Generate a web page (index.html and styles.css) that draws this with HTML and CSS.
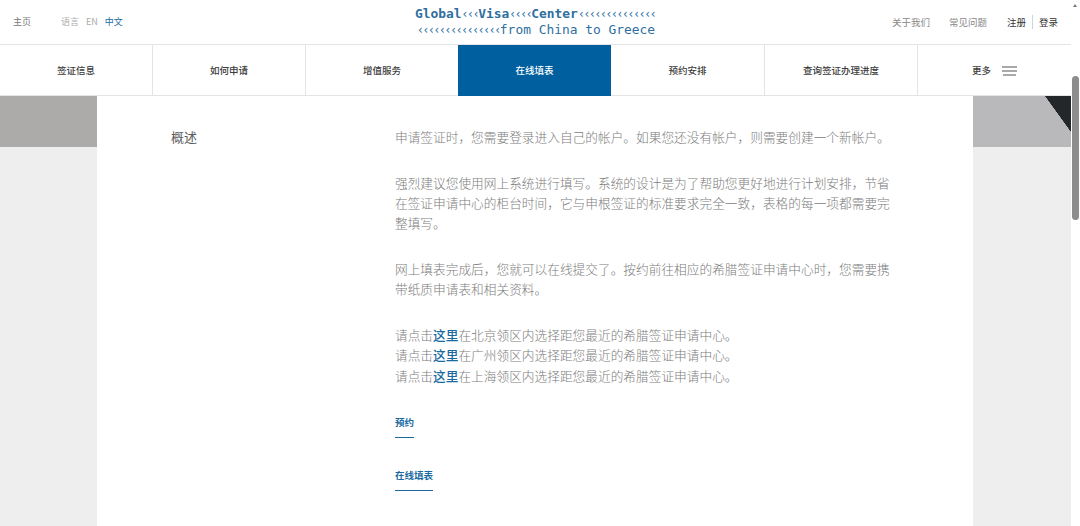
FILE: index.html
```html
<!DOCTYPE html>
<html lang="zh-CN">

<head>
  <meta charset="UTF-8">
  <meta name="viewport" content="width=device-width, initial-scale=1.0">
  <title>在线填表</title>
  <link rel="stylesheet" href="styles.css">
</head>

<body>
  <div class="page">
    <!-- 顶部栏 -->
    <header class="topbar">
      <div class="top-left">
        <a class="home">主页</a>
        <span class="lang-label">语言</span>
        <a class="lang">EN</a>
        <a class="lang active">中文</a>
      </div>
      <div class="logo">
        <div class="logo-line bold">Global<i>‹‹‹</i>Visa<i>‹‹‹‹</i>Center<i>‹‹‹‹‹‹‹‹‹‹‹‹‹‹</i></div>
        <div class="logo-line second"><i>‹‹‹‹‹‹‹‹‹‹‹‹‹‹‹</i>from China to Greece</div>
      </div>
      <div class="top-right">
        <a class="plain">关于我们</a>
        <a class="plain">常见问题</a>
        <a class="account first">注册</a>
        <a class="account">登录</a>
      </div>
    </header>

    <!-- 主导航 -->
    <nav class="nav">
      <a class="nav-item">签证信息</a>
      <a class="nav-item">如何申请</a>
      <a class="nav-item">增值服务</a>
      <a class="nav-item active">在线填表</a>
      <a class="nav-item">预约安排</a>
      <a class="nav-item">查询签证办理进度</a>
      <a class="nav-item more">更多
        <svg class="burger" width="15" height="10" viewBox="0 0 15 10">
          <path d="M0 1h15M0 5h15M1 9h13" stroke="#555" stroke-width="1.2" fill="none" />
        </svg>
      </a>
    </nav>

    <!-- 内容 -->
    <main class="main">
      <div class="card">
        <h2 class="side-title">概述</h2>
        <div class="text">
          <p>申请签证时，您需要登录进入自己的帐户。如果您还没有帐户，则需要创建一个新帐户。</p>
          <p>强烈建议您使用网上系统进行填写。系统的设计是为了帮助您更好地进行计划安排，节省在签证申请中心的柜台时间，它与申根签证的标准要求完全一致，表格的每一项都需要完整填写。</p>
          <p>网上填表完成后，您就可以在线提交了。按约前往相应的希腊签证申请中心时，您需要携带纸质申请表和相关资料。</p>
          <p class="last">请点击<a class="here">这里</a>在北京领区内选择距您最近的希腊签证申请中心。<br>
            请点击<a class="here">这里</a>在广州领区内选择距您最近的希腊签证申请中心。<br>
            请点击<a class="here">这里</a>在上海领区内选择距您最近的希腊签证申请中心。</p>
          <a class="section-link">预约</a>
          <a class="section-link">在线填表</a>
        </div>
      </div>
    </main>
  </div>

  <!-- 滚动条 -->
  <div class="scrollbar">
    <div class="arrow"></div>
    <div class="thumb"></div>
  </div>
</body>

</html>
```

FILE: styles.css
```css
html,
body {
  margin: 0;
  height: 526px;
  overflow: hidden;
}

body {
  display: flex;
  font-family: "Noto Sans CJK SC", "Liberation Sans", sans-serif;
  background: #fff;
}

.page {
  width: 1071px;
  height: 526px;
  display: flex;
  flex-direction: column;
}

/* 顶部栏 */
.topbar {
  height: 44px;
  flex: none;
  display: flex;
  justify-content: space-between;
  align-items: center;
  padding: 0 13px;
  border-bottom: 1px solid #e4e4e4;
  font-size: 9.5px;
  position: relative;
}

.top-left,
.top-right {
  display: flex;
  align-items: center;
}

.top-left {
  font-size: 9px;
  padding-bottom: 2px;
}

.home {
  color: #777;
  margin-right: 30px;
}

.lang-label {
  color: #aaa;
  margin-right: 7px;
}

.lang {
  color: #aaa;
  margin-right: 7px;
}

.lang.active {
  color: #1a6a9f;
}

.plain {
  color: #888;
  margin-left: 19px;
}

.account {
  color: #333;
  padding-left: 6px;
}

.account.first {
  margin-left: 20px;
  padding: 0 6px 0 0;
  border-right: 1px solid #c9d6e0;
}

/* logo */
.logo {
  position: absolute;
  left: 415px;
  top: 6px;
  font-family: "DejaVu Sans Mono", "Liberation Mono", monospace;
  font-size: 12.9px;
  line-height: 15px;
  color: #2f6f9f;
  white-space: nowrap;
}

.logo-line.bold {
  font-weight: bold;
}

.logo-line.second {
  padding-left: 2px;
  margin-top: -0.5px;
}

.logo i {
  font-style: normal;
  font-size: 11.5px;
  letter-spacing: -1.4px;
  font-weight: normal;
}

/* 主导航 */
.nav {
  height: 50px;
  flex: none;
  display: flex;
  border-bottom: 1px solid #e4e4e4;
}

.nav-item {
  width: 153px;
  display: flex;
  align-items: center;
  justify-content: center;
  box-sizing: border-box;
  padding-bottom: 1px;
  border-right: 1px solid #e4e4e4;
  font-size: 9.5px;
  font-weight: 500;
  color: #3c3c3c;
}

.nav-item.active {
  background: #005f9e;
  color: #fff;
  border-right: none;
  margin-left: -1px;
  margin-bottom: -1px;
}

.nav-item.active + .nav-item {
  width: 154px;
}

.nav-item.more {
  border-right: none;
}

.burger {
  margin: 3px 0 0 11px;
}

/* 内容 */
.main {
  flex: 1;
  display: flex;
  justify-content: center;
  background:
    linear-gradient(to top right, transparent 49.5%, #24272a 50.5%) right top / 26px 36px no-repeat,
    linear-gradient(to right, #adabaa 0%, #adabaa 50%, #b9b9bb 50%, #b9b9bb 100%) left top / 100% 51px no-repeat,
    #eeeeee;
}

.card {
  width: 876px;
  margin-left: -1px;
  background: #fff;
  display: flex;
  padding-top: 31px;
  box-sizing: border-box;
}

.side-title {
  width: 224px;
  margin: 0 0 0 74px;
  font-size: 13px;
  line-height: 20px;
  font-weight: normal;
  color: #5c5c5c;
}

.text {
  width: 499px;
  font-size: 12.7px;
  line-height: 20.2px;
  font-weight: 300;
  color: #7c7c7c;
}

.text p {
  margin: 0 0 25.7px;
}

.text p.last {
  margin-bottom: 29px;
}

.here {
  color: #1a6a9f;
  font-weight: 500;
}

.section-link {
  display: table;
  font-size: 9.5px;
  line-height: 14px;
  font-weight: 700;
  color: #1a6a9f;
  padding-bottom: 8px;
  border-bottom: 1.5px solid #1a6a9f;
  margin-bottom: 30px;
}

/* 滚动条 */
.scrollbar {
  width: 9px;
  height: 526px;
  background: #fff;
  position: relative;
}

.arrow {
  position: absolute;
  left: 2px;
  top: 4px;
  border-left: 2.5px solid transparent;
  border-right: 2.5px solid transparent;
  border-bottom: 3px solid #777;
}

.thumb {
  position: absolute;
  left: 1px;
  top: 76px;
  width: 7px;
  height: 144px;
  background: #8d8d8d;
  border-radius: 4px;
}
```
